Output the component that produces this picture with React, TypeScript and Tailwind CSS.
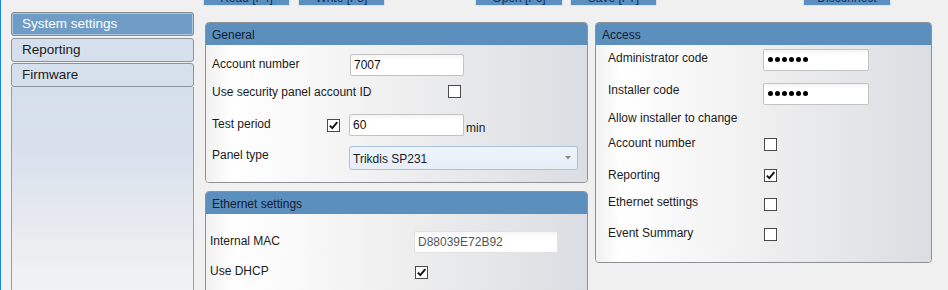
import React from "react";

function Check({ checked = false, className = "" }: { checked?: boolean; className?: string }) {
  return (
    <div className={"w-[13px] h-[13px] shrink-0 border border-[#4a4a4a] bg-white flex items-center justify-center " + className}>
      {checked && (
        <svg width="11" height="11" viewBox="0 0 11 11">
          <path d="M1.8 5.6 L4.3 8.2 L9.3 2.2" fill="none" stroke="#111" strokeWidth="1.9" />
        </svg>
      )}
    </div>
  );
}

function TopBtn({ label, className }: { label: string; className: string }) {
  return (
    <div className={"h-[20px] shrink-0 bg-[#5b8fc0] border border-[#d9e4ef] flex items-end justify-center pb-[1px] leading-none text-[12px] text-[#16305c] " + className}>
      {label}
    </div>
  );
}

function Panel({ title, children, className = "" }: { title: string; children: React.ReactNode; className?: string }) {
  return (
    <div className={"border border-[#8e9196] rounded-[4px] overflow-hidden flex flex-col " + className}>
      <div className="h-[22px] shrink-0 bg-[#5b8fbe] flex items-center px-[6px] pt-[1px] text-[#0e1c30] leading-none">{title}</div>
      <div className="flex-1 bg-[linear-gradient(to_right,#f1f1f1_0%,#ffffff_7%,#ededee_55%,#dadde2_100%)]">{children}</div>
    </div>
  );
}

function Input({ value, className = "" }: { value: React.ReactNode; className?: string }) {
  return (
    <div className={"h-[22px] shrink-0 rounded-[2px] border border-[#c3c3c3] bg-[linear-gradient(to_bottom,#f4f4f4_0%,#ffffff_25%,#ffffff_100%)] px-[3px] pt-[2px] leading-[16px] text-[#111] " + className}>
      {value}
    </div>
  );
}

function Dots() {
  return (
    <div className="flex gap-[2px] pt-[5px] pl-[1px]">
      {[0, 1, 2, 3, 4, 5].map((i) => (
        <div key={i} className="w-[5px] h-[5px] rounded-full bg-black" />
      ))}
    </div>
  );
}

export default function App() {
  return (
    <div className="w-[948px] h-[290px] overflow-hidden bg-[#f0f0f0] border-l border-[#1a88e0] font-['Liberation_Sans',Arial,sans-serif] text-[12px] text-[#1b1b1b] flex flex-col">
      {/* top toolbar (mostly scrolled out of view) */}
      <div className="h-[6px] shrink-0 overflow-hidden flex items-end">
        <TopBtn label="Read [F4]" className="ml-[202px] w-[87px]" />
        <TopBtn label="Write [F5]" className="ml-[8px] w-[87px]" />
        <TopBtn label="Open [F6]" className="ml-[90px] w-[88px]" />
        <TopBtn label="Save [F7]" className="ml-[7px] w-[87px]" />
        <TopBtn label="Disconnect" className="ml-[146px] w-[88px]" />
      </div>

      <div className="flex-1 min-h-0 flex items-start">
        {/* sidebar */}
        <div className="ml-[10px] mt-[6px] w-[183px] self-stretch flex flex-col text-[13.5px]">
          <div className="h-[24px] shrink-0 rounded-[3px] border border-[#868b92] bg-[#6e9cc6] shadow-[inset_0_0_0_1px_rgba(255,255,255,0.45)] text-white flex items-center pl-[10px] pt-[1px]">
            System settings
          </div>
          <div className="mt-[2px] h-[24px] shrink-0 rounded-[3px] border border-[#8e949b] bg-[#d6e0ec] flex items-center pl-[10px] pt-[1px] text-[#1a1a1a]">
            Reporting
          </div>
          <div className="mt-[1px] h-[24px] shrink-0 rounded-[3px] border border-[#8e949b] bg-[#d6e0ec] flex items-center pl-[10px] pt-[1px] text-[#1a1a1a]">
            Firmware
          </div>
          <div className="flex-1 border-x border-[#9aa0a6] bg-[linear-gradient(to_bottom,#d5dfeb_0%,#d8e0ed_30%,#e2e7ee_55%,#eef0f2_90%,#f1f2f3_100%)]" />
        </div>

        {/* middle column */}
        <div className="ml-[11px] mt-[16px] w-[383px] flex flex-col gap-[8px] shrink-0">
          <Panel title="General">
            <div className="pt-[9px] pb-[12px] pl-[6px] flex flex-col">
              <div className="h-[22px] flex items-start">
                <div className="w-[138px] pt-[2px] leading-[16px]">Account number</div>
                <Input value="7007" className="w-[114px]" />
              </div>
              <div className="mt-[9px] h-[13px] flex items-center">
                <div className="w-[236px] leading-[16px] pt-[1px]">Use security panel account ID</div>
                <Check />
              </div>
              <div className="mt-[16px] h-[22px] flex items-start">
                <div className="w-[115px] pt-[2px] leading-[16px]">Test period</div>
                <Check checked className="mt-[5px]" />
                <Input value="60" className="ml-[9px] w-[115px]" />
                <div className="ml-[2px] pt-[6px] leading-[16px]">min</div>
              </div>
              <div className="mt-[10px] h-[24px] flex items-start">
                <div className="w-[137px] pt-[1px] leading-[16px]">Panel type</div>
                <div className="w-[229px] h-[24px] rounded-[3px] border border-[#a9c3df] bg-[linear-gradient(to_bottom,#eef4fb_0%,#e6eef8_100%)] flex items-center justify-between pl-[3px] pr-[6px]">
                  <span className="pt-[1px]">Trikdis SP231</span>
                  <svg width="6" height="4" viewBox="0 0 6 4">
                    <path d="M0 0 L6 0 L3 3.5 Z" fill="#8a8a8a" />
                  </svg>
                </div>
              </div>
            </div>
          </Panel>

          <Panel title="Ethernet settings" className="h-[130px]">
            <div className="pt-[17px] pl-[4px] flex flex-col">
              <div className="h-[22px] flex items-start">
                <div className="w-[204px] pt-[2px] leading-[16px]">Internal MAC</div>
                <div className="w-[144px] h-[22px] rounded-[2px] border border-[#e2e2e2] bg-[linear-gradient(to_bottom,#f7f7f7_0%,#ffffff_30%)] px-[3px] pt-[2px] leading-[16px] text-[#555]">
                  D88039E72B92
                </div>
              </div>
              <div className="mt-[9px] flex items-start">
                <div className="w-[205px] pt-[1px] leading-[16px]">Use DHCP</div>
                <Check checked className="mt-[4px]" />
              </div>
            </div>
          </Panel>
        </div>

        {/* right column */}
        <div className="ml-[7px] mt-[16px] w-[337px] shrink-0">
          <Panel title="Access" className="h-[241px]">
            <div className="pt-[4px] pl-[12px] flex flex-col">
              <div className="flex items-start">
                <div className="w-[155px] pt-[1px] leading-[16px]">Administrator code</div>
                <Input value={<Dots />} className="w-[106px]" />
              </div>
              <div className="mt-[10px] flex items-start">
                <div className="w-[155px] pt-[1px] leading-[16px]">Installer code</div>
                <Input value={<Dots />} className="mt-[2px] w-[106px]" />
              </div>
              <div className="mt-[4px] pt-[1px] leading-[16px]">Allow installer to change</div>
              <div className="mt-[8px] flex items-start">
                <div className="w-[156px] pt-[1px] leading-[16px]">Account number</div>
                <Check className="mt-[4px]" />
              </div>
              <div className="mt-[15px] flex items-start">
                <div className="w-[156px] pt-[1px] leading-[16px]">Reporting</div>
                <Check checked className="mt-[3px]" />
              </div>
              <div className="mt-[10px] flex items-start">
                <div className="w-[156px] pt-[1px] leading-[16px]">Ethernet settings</div>
                <Check className="mt-[5px]" />
              </div>
              <div className="mt-[13px] flex items-start">
                <div className="w-[156px] pt-[1px] leading-[16px]">Event Summary</div>
                <Check className="mt-[4px]" />
              </div>
            </div>
          </Panel>
        </div>
      </div>
    </div>
  );
}
